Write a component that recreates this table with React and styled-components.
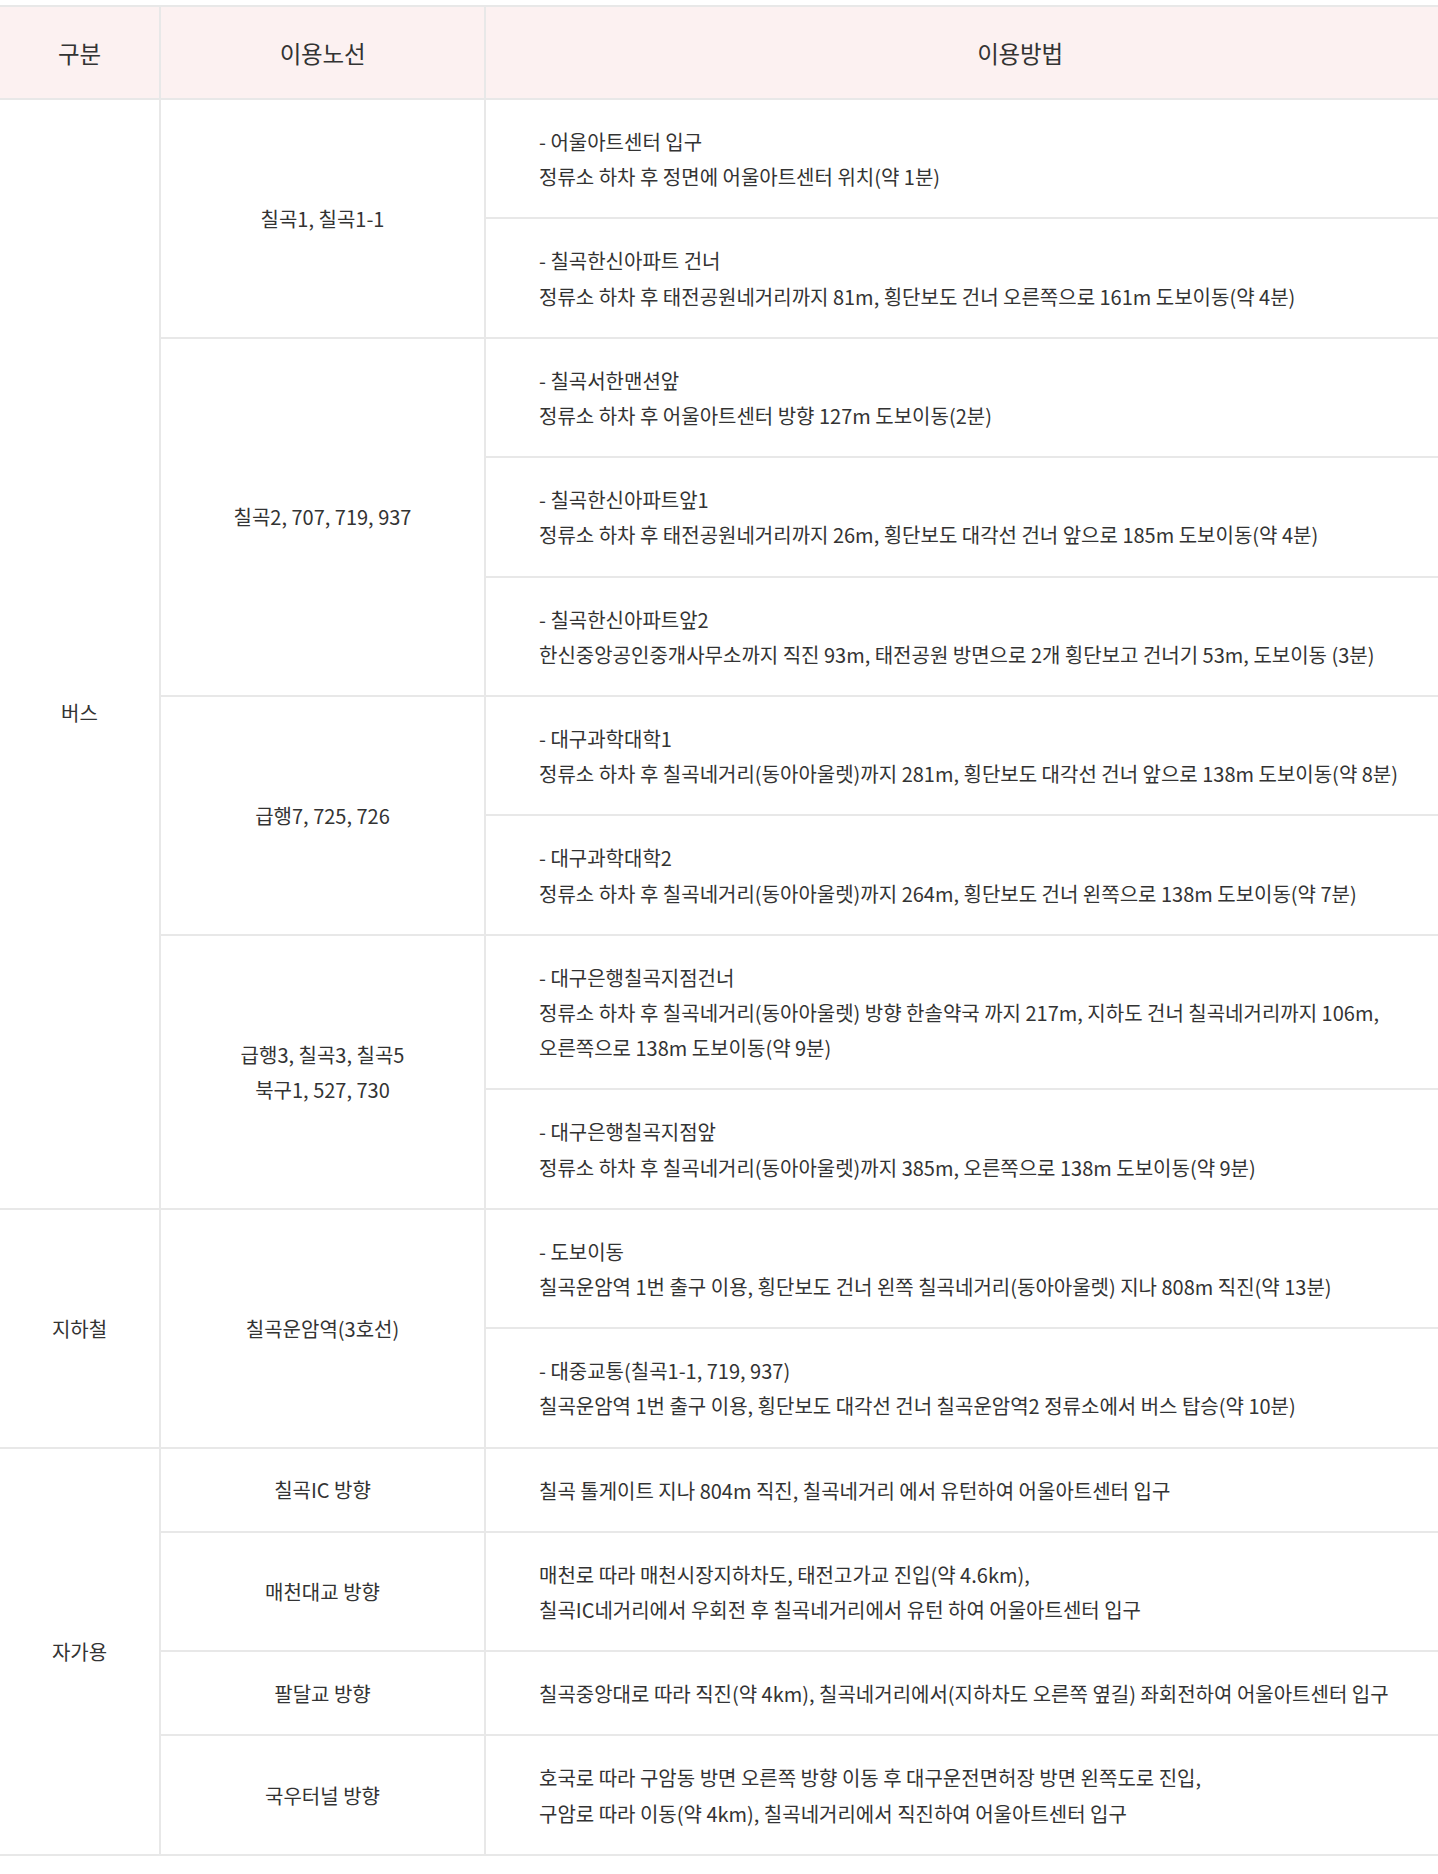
import React from "react";
import styled, { createGlobalStyle } from "styled-components";

const GlobalStyle = createGlobalStyle`
  html, body {
    margin: 0;
    padding: 0;
    background: #ffffff;
  }
  body {
    font-family: "Noto Sans CJK KR", "Noto Sans", sans-serif;
    color: #333333;
  }
`;

const Page = styled.div`
  padding-top: 5px;
  padding-bottom: 18px;
`;

const Table = styled.table`
  width: 100%;
  border-collapse: collapse;
  table-layout: fixed;
  border-top: 2px solid #e8e8e8;
  border-bottom: 2px solid #e8e8e8;
  font-family: "Noto Sans CJK KR", "Noto Sans", sans-serif;
`;

const Col = styled.col`
  width: ${(p) => p.$w || "auto"};
`;

const HeadCell = styled.th`
  height: 91px;
  padding: 0 0 0 ${(p) => p.$indent || 0}px;
  background: #fcf1f1;
  font-size: 23.5px;
  font-weight: 400;
  letter-spacing: -0.2px;
  color: #333333;
  text-align: center;
  vertical-align: middle;
  border-bottom: 2px solid #e8e8e8;
  border-left: ${(p) => (p.$first ? "none" : "2px solid #e8e8e8")};
`;

const GroupCell = styled.td`
  padding: ${(p) => p.$shift || 0}px 8px 0;
  font-size: 20px;
  line-height: 35.2px;
  letter-spacing: 0;
  color: #333333;
  text-align: center;
  vertical-align: middle;
  border-bottom: 2px solid #e8e8e8;
`;

const RouteCell = styled.td`
  padding: 0 8px;
  font-size: 20px;
  line-height: 35.2px;
  letter-spacing: 0;
  color: #333333;
  text-align: center;
  vertical-align: middle;
  border-left: 2px solid #e8e8e8;
  border-bottom: 2px solid #e8e8e8;
`;

const MethodCell = styled.td`
  padding: 24px 10px 23px 53px;
  font-size: 20px;
  line-height: 35.2px;
  letter-spacing: 0;
  color: #333333;
  text-align: left;
  vertical-align: middle;
  white-space: nowrap;
  border-left: 2px solid #e8e8e8;
  border-bottom: 2px solid #e8e8e8;
`;

const Line = styled.div`
  display: block;
`;

const groups = [
  {
    type: "버스",
    shift: 118,
    routes: [
      {
        name: ["칠곡1, 칠곡1-1"],
        methods: [
          ["- 어울아트센터 입구", "정류소 하차 후 정면에 어울아트센터 위치(약 1분)"],
          [
            "- 칠곡한신아파트 건너",
            "정류소 하차 후 태전공원네거리까지 81m, 횡단보도 건너 오른쪽으로 161m 도보이동(약 4분)",
          ],
        ],
      },
      {
        name: ["칠곡2, 707, 719, 937"],
        methods: [
          ["- 칠곡서한맨션앞", "정류소 하차 후 어울아트센터 방향 127m 도보이동(2분)"],
          [
            "- 칠곡한신아파트앞1",
            "정류소 하차 후 태전공원네거리까지 26m, 횡단보도 대각선 건너 앞으로 185m 도보이동(약 4분)",
          ],
          [
            "- 칠곡한신아파트앞2",
            "한신중앙공인중개사무소까지 직진 93m, 태전공원 방면으로 2개 횡단보고 건너기 53m, 도보이동 (3분)",
          ],
        ],
      },
      {
        name: ["급행7, 725, 726"],
        methods: [
          [
            "- 대구과학대학1",
            "정류소 하차 후 칠곡네거리(동아아울렛)까지 281m, 횡단보도 대각선 건너 앞으로 138m 도보이동(약 8분)",
          ],
          [
            "- 대구과학대학2",
            "정류소 하차 후 칠곡네거리(동아아울렛)까지 264m, 횡단보도 건너 왼쪽으로 138m 도보이동(약 7분)",
          ],
        ],
      },
      {
        name: ["급행3, 칠곡3, 칠곡5", "북구1, 527, 730"],
        methods: [
          [
            "- 대구은행칠곡지점건너",
            "정류소 하차 후 칠곡네거리(동아아울렛) 방향 한솔약국 까지 217m, 지하도 건너 칠곡네거리까지 106m,",
            "오른쪽으로 138m 도보이동(약 9분)",
          ],
          [
            "- 대구은행칠곡지점앞",
            "정류소 하차 후 칠곡네거리(동아아울렛)까지 385m, 오른쪽으로 138m 도보이동(약 9분)",
          ],
        ],
      },
    ],
  },
  {
    type: "지하철",
    routes: [
      {
        name: ["칠곡운암역(3호선)"],
        methods: [
          [
            "- 도보이동",
            "칠곡운암역 1번 출구 이용, 횡단보도 건너 왼쪽 칠곡네거리(동아아울렛) 지나 808m 직진(약 13분)",
          ],
          [
            "- 대중교통(칠곡1-1, 719, 937)",
            "칠곡운암역 1번 출구 이용, 횡단보도 대각선 건너 칠곡운암역2 정류소에서 버스 탑승(약 10분)",
          ],
        ],
      },
    ],
  },
  {
    type: "자가용",
    routes: [
      {
        name: ["칠곡IC 방향"],
        methods: [["칠곡 톨게이트 지나 804m 직진, 칠곡네거리 에서 유턴하여 어울아트센터 입구"]],
      },
      {
        name: ["매천대교 방향"],
        methods: [
          [
            "매천로 따라 매천시장지하차도, 태전고가교 진입(약 4.6km),",
            "칠곡IC네거리에서 우회전 후 칠곡네거리에서 유턴 하여 어울아트센터 입구",
          ],
        ],
      },
      {
        name: ["팔달교 방향"],
        methods: [
          [
            "칠곡중앙대로 따라 직진(약 4km), 칠곡네거리에서(지하차도 오른쪽 옆길) 좌회전하여 어울아트센터 입구",
          ],
        ],
      },
      {
        name: ["국우터널 방향"],
        methods: [
          [
            "호국로 따라 구암동 방면 오른쪽 방향 이동 후 대구운전면허장 방면 왼쪽도로 진입,",
            "구암로 따라 이동(약 4km), 칠곡네거리에서 직진하여 어울아트센터 입구",
          ],
        ],
      },
    ],
  },
];

function Lines({ items }) {
  return items.map((t, i) => <Line key={i}>{t}</Line>);
}

export default function App() {
  const rows = [];
  groups.forEach((g, gi) => {
    const groupSpan = g.routes.reduce((s, r) => s + r.methods.length, 0);
    g.routes.forEach((r, ri) => {
      r.methods.forEach((m, mi) => {
        rows.push(
          <tr key={`${gi}-${ri}-${mi}`}>
            {ri === 0 && mi === 0 && (
              <GroupCell rowSpan={groupSpan} $shift={g.shift}>
                {g.type}
              </GroupCell>
            )}
            {mi === 0 && (
              <RouteCell rowSpan={r.methods.length}>
                <Lines items={r.name} />
              </RouteCell>
            )}
            <MethodCell>
              <Lines items={m} />
            </MethodCell>
          </tr>
        );
      });
    });
  });

  return (
    <>
      <GlobalStyle />
      <Page>
        <Table>
          <colgroup>
            <Col $w="160px" />
            <Col $w="325px" />
            <Col />
          </colgroup>
          <thead>
            <tr>
              <HeadCell $first>구분</HeadCell>
              <HeadCell>이용노선</HeadCell>
              <HeadCell $indent={116}>이용방법</HeadCell>
            </tr>
          </thead>
          <tbody>{rows}</tbody>
        </Table>
      </Page>
    </>
  );
}
